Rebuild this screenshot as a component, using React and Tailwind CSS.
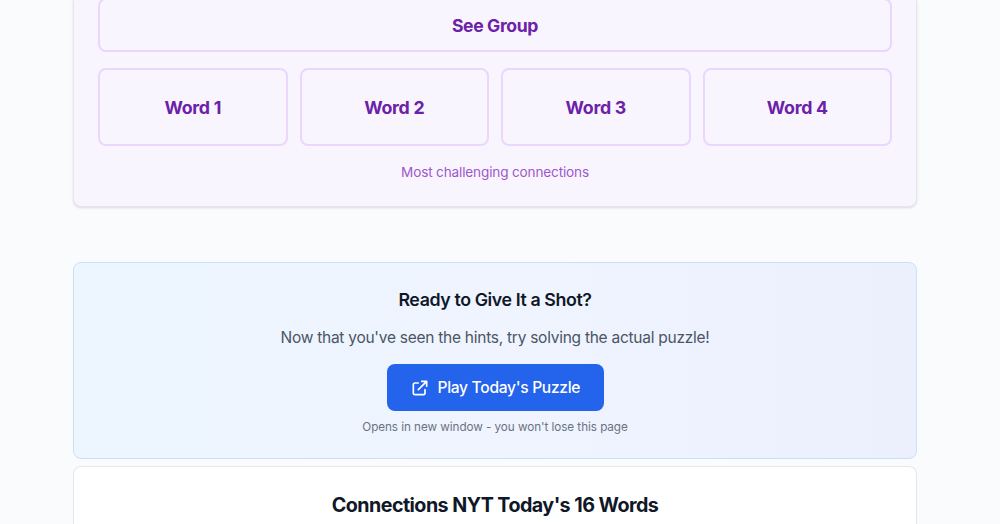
const words = ["Word 1", "Word 2", "Word 3", "Word 4"];

function GroupCard() {
  return (
    <section className="flex h-[207px] flex-col rounded-b-lg border-x border-b border-gray-200 bg-[#f9f5fe] px-6 text-center shadow-sm">
      <button className="-mt-0.5 flex h-[54px] w-full shrink-0 items-center justify-center rounded-lg border-2 border-[#ead7fe] pt-px text-[17.6px] leading-7 font-bold tracking-[-0.38px] text-[#6b21a8]">
        See Group
      </button>

      <div className="mt-4 grid grid-cols-4 gap-3">
        {words.map((word) => (
          <button
            key={word}
            className="flex h-[78px] items-center justify-center rounded-lg border-2 border-[#ead7fe] pt-px text-[17.8px] leading-7 font-bold tracking-[-0.3px] text-[#6b21a8]"
          >
            {word}
          </button>
        ))}
      </div>

      <p className="mt-4 text-[13.6px] leading-5 tracking-[-0.16px] text-[#9c59c9]">
        Most challenging connections
      </p>
    </section>
  );
}

function PlayCard() {
  return (
    <section className="mt-[55px] flex h-[197px] flex-col items-center rounded-lg border border-[#c9e0fb] bg-linear-to-r/srgb from-[#edf6ff] via-[#eff4ff] to-[#ecf0fd] text-center">
      <h3 className="mt-[23px] text-[17.8px] leading-7 font-semibold tracking-[-0.4px] text-gray-900">
        Ready to Give It a Shot?
      </h3>
      <p className="mt-3 text-[15.5px] leading-6 tracking-[-0.26px] text-gray-600">
        Now that you've seen the hints, try solving the actual puzzle!
      </p>
      <button className="mt-3.5 flex h-[47px] w-[217px] shrink-0 items-center rounded-lg bg-[#2463eb] pl-[23px] text-[15.6px] font-medium tracking-[-0.31px] text-white">
        <svg
          className="mr-2 h-5 w-5 shrink-0"
          viewBox="0 0 24 24"
          fill="none"
          stroke="currentColor"
          strokeWidth="2"
          strokeLinecap="round"
          strokeLinejoin="round"
        >
          <path d="M10 6H6a2 2 0 00-2 2v10a2 2 0 002 2h10a2 2 0 002-2v-4M14 4h6m0 0v6m0-6L10 14" />
        </svg>
        Play Today's Puzzle
      </button>
      <p className="mt-2 text-[11.7px] leading-4 tracking-[-0.05px] text-gray-500">
        Opens in new window - you won't lose this page
      </p>
    </section>
  );
}

function WordsCard() {
  return (
    <section className="mt-[7px] h-[58px] rounded-t-lg border-x border-t border-gray-200 bg-white pt-[22px] text-center">
      <h2 className="text-[19.7px] leading-8 font-bold tracking-[-0.55px] text-gray-900">
        Connections NYT Today's 16 Words
      </h2>
    </section>
  );
}

export default function App() {
  return (
    <main className="h-[524px] overflow-hidden bg-[#fafbfd] font-['Inter',sans-serif]">
      <div className="ml-[73px] w-[844px]">
        <GroupCard />
        <PlayCard />
        <WordsCard />
      </div>
    </main>
  );
}
